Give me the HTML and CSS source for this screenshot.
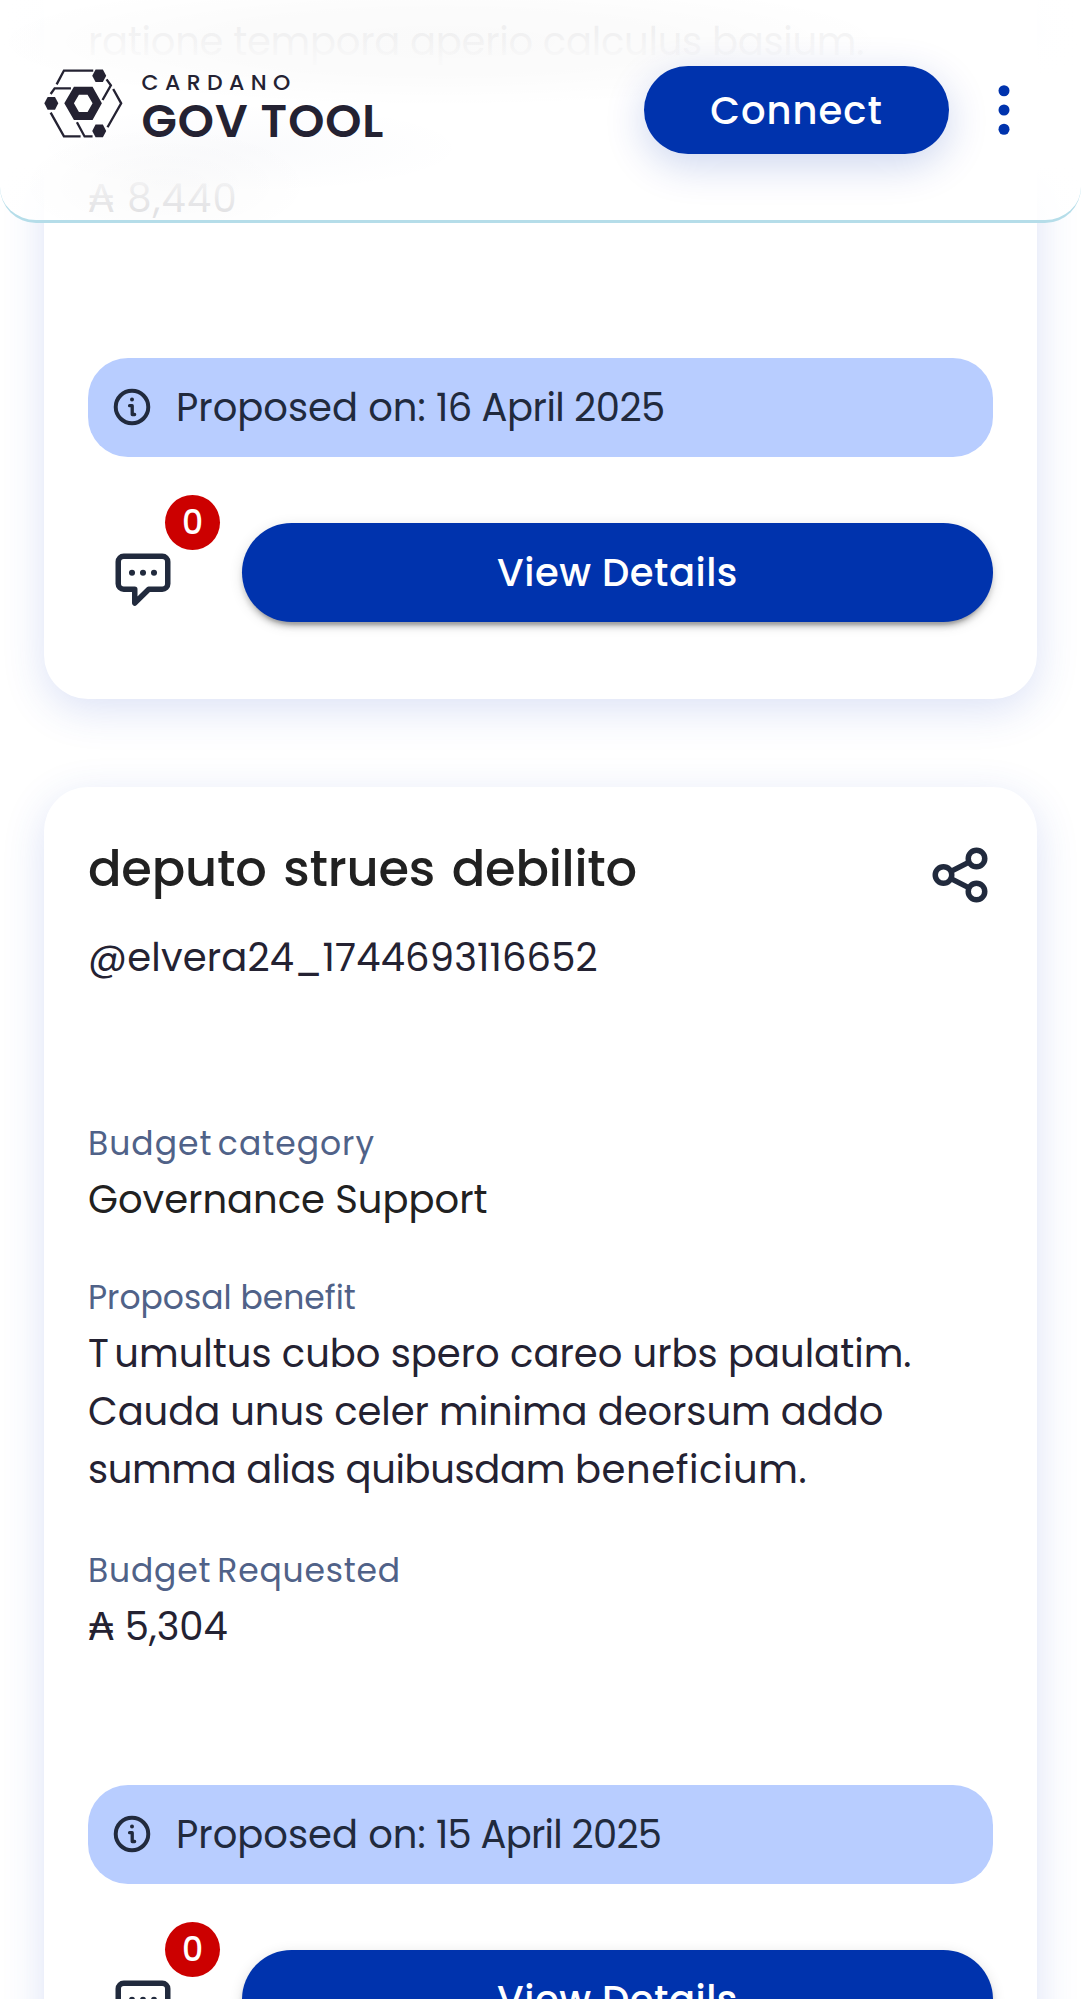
FILE: index.html
```html
<!DOCTYPE html>
<html lang="en">
<head>
<meta charset="utf-8">
<title>Cardano GovTool</title>
<link rel="stylesheet" href="styles.css">
</head>
<body>
<svg width="0" height="0" class="sprite" aria-hidden="true">
  <symbol id="i-info" viewBox="0 0 20 20">
    <circle cx="10" cy="10" r="7.4" fill="none" stroke="currentColor" stroke-width="1.8"/>
    <circle cx="10" cy="6.6" r=".9" fill="currentColor"/>
    <path d="M8.9 9.4h1.2v4h1.1" fill="none" stroke="currentColor" stroke-width="1.5" stroke-linecap="round" stroke-linejoin="round"/>
  </symbol>
  <symbol id="i-comment" viewBox="0 0 24 24">
    <path d="M5 3h14a2 2 0 0 1 2 2v8a2 2 0 0 1-2 2h-4.900L9 20v-5H5a2 2 0 0 1-2-2V5a2 2 0 0 1 2-2z" fill="none" stroke="currentColor" stroke-width="2" stroke-linejoin="round"/>
    <g fill="currentColor"><circle cx="8" cy="9" r="1.1"/><circle cx="12" cy="9" r="1.1"/><circle cx="16" cy="9" r="1.1"/></g>
  </symbol>
  <symbol id="i-share" viewBox="0 0 24 24">
    <g fill="none" stroke="currentColor" stroke-width="2"><circle cx="6" cy="12" r="3"/><circle cx="18" cy="6" r="3"/><circle cx="18" cy="18" r="3"/><path d="M8.700 10.700l6.600-3.400M8.700 13.300l6.600 3.400"/></g>
  </symbol>
</svg>

<header class="topbar">
  <div class="logo">
    <svg class="logo-mark" viewBox="42 57 236 207">
      <g fill="none" stroke="currentColor" stroke-width="7">
        <path d="M80 103L102 61.500H190M230 88L243 106L218 150M250 117L274 160L233 232M62 132L74 115H123M62 188L102 259.500H152M141 217L164 259.500H188"/>
      </g>
      <g fill="currentColor">
        <path d="M187 77l10-19h22l10 19-10 19h-22z"/>
        <path d="M43 160l10-19h22l10 19-10 19H53z"/>
        <path d="M187 243l10-19h22l10 19-10 19h-22z"/>
        <path fill-rule="evenodd" d="M103 160L132 110H188L216 160L188 210H132ZM132 160L147 186H173L188 160L173 134H147Z"/>
      </g>
    </svg>
    <div class="logo-text">
      <span class="logo-small">CARDANO</span>
      <span class="logo-big">GOV TOOL</span>
    </div>
  </div>
  <div class="actions">
    <button class="connect">Connect</button>
    <svg class="more" viewBox="0 0 24 24" fill="currentColor"><circle cx="12" cy="5" r="2"/><circle cx="12" cy="12" r="2"/><circle cx="12" cy="19" r="2"/></svg>
  </div>
</header>

<main class="list">
  <article class="card card-first">
    <p class="value benefit-tail">ratione tempora aperio calculus basium.</p>
    <section class="field last">
      <p class="value amount-wide">₳ 8,440</p>
    </section>
    <div class="proposed"><svg class="icon-info"><use href="#i-info"/></svg><span>Proposed on: <span class="date">16 April 2025</span></span></div>
    <div class="foot">
      <div class="comments"><svg class="icon"><use href="#i-comment"/></svg><span class="badge">0</span></div>
      <button class="details">View Details</button>
    </div>
  </article>

  <article class="card">
    <div class="head">
      <h2 class="title">deputo strues debilito</h2>
      <svg class="icon share"><use href="#i-share"/></svg>
    </div>
    <p class="value user">@elvera24_1744693116652</p>
    <section class="field">
      <h3 class="label label-wide">Budget category</h3>
      <p class="value dark">Governance Support</p>
    </section>
    <section class="field">
      <h3 class="label">Proposal benefit</h3>
      <p class="value benefit">Tumultus cubo spero careo urbs paulatim.<br><span class="line-2">Cauda unus celer minima deorsum addo</span><br><span class="line-3">summa alias quibusdam </span><span class="line-end">beneficium.</span></p>
    </section>
    <section class="field last">
      <h3 class="label label-requested">Budget Requested</h3>
      <p class="value">₳ 5,304</p>
    </section>
    <div class="proposed"><svg class="icon-info"><use href="#i-info"/></svg><span>Proposed on: <span class="date date-tight">15 April 2025</span></span></div>
    <div class="foot">
      <div class="comments"><svg class="icon"><use href="#i-comment"/></svg><span class="badge">0</span></div>
      <button class="details">View Details</button>
    </div>
  </article>
</main>
</body>
</html>
```
FILE: styles.css
```css
* { box-sizing: border-box; }
html, body { margin: 0; height: 1999px; overflow: hidden; }
body { background: #fff; color: #242232; font-family: Poppins, Inter, sans-serif; font-size: 38.5px; line-height: 58px; position: relative; }
h2, h3, p { margin: 0; font-weight: 400; }
button { border: 0; margin: 0; padding: 2px 0 0; font: inherit; color: #fff; background: #0033ad; }
svg { display: block; flex: none; }
.sprite { position: absolute; }

.topbar {
  position: absolute; top: 0; left: 0; z-index: 2;
  width: 100%; height: 223px; padding: 0 44px;
  display: flex; justify-content: space-between; align-items: flex-start;
  border-bottom: 3px solid #b5dde9; border-radius: 0 0 36px 36px;
  background:
    radial-gradient(ellipse 460px 65px at 440px 42px, rgba(0,0,0,.02), rgba(0,0,0,.016) 50%, transparent),
    radial-gradient(ellipse 150px 60px at 165px 185px, rgba(0,0,20,.02), transparent),
    radial-gradient(ellipse 220px 45px at 250px 148px, rgba(40,70,140,.022), transparent),
    linear-gradient(rgba(255,255,255,.94), rgba(255,255,255,.95) 30px, rgba(255,255,255,.985) 56px, #fff 75px, #fff 165px, rgba(255,255,255,.95) 185px, rgba(255,255,255,.88) 212px);
}
.logo { display: flex; padding-top: 69px; gap: 19px; }
.logo-mark { width: 78.500px; height: 69px; }
.logo-text { display: flex; flex-direction: column; white-space: nowrap; }
.logo-small { font-size: 22px; line-height: 28px; font-weight: 500; letter-spacing: 6.400px; }
.logo-big { font-size: 46px; line-height: 48px; font-weight: 600; letter-spacing: 1px; }
.actions { display: flex; align-items: center; padding-top: 66px; gap: 22px; }
.connect { width: 305px; height: 88px; border-radius: 44px; font-weight: 500; letter-spacing: 1px; box-shadow: 0 11px 41px rgba(0,51,173,.2); }
.more { width: 66px; height: 66px; color: #0033ad; }

.list { display: flex; flex-direction: column; gap: 88px; padding: 0 44px; }
.card { background: #fff; border-radius: 44px; padding: 49px 44px 77px; box-shadow: 0 11px 41px rgba(47,85,200,.17); }
.card-first { padding-top: 13px; border-radius: 0 0 44px 44px; }
.head { display: flex; justify-content: space-between; height: 66px; margin-bottom: 27px; }
.title { font-size: 49.500px; line-height: 66px; font-weight: 500; color: #212121; white-space: nowrap; letter-spacing: -.2px; word-spacing: 4px; }
.icon { width: 66px; height: 66px; color: #212a3d; }
.share { margin-top: 6px; }
.value { white-space: nowrap; }
.dark { color: #212121; }
.user { margin-bottom: 132px; letter-spacing: .18px; }
.field { margin-bottom: 44.500px; }
.benefit::first-letter { letter-spacing: 5.500px; }
.line-2 { letter-spacing: -.07px; }
.line-3 { letter-spacing: -.35px; }
.line-end { letter-spacing: .6px; }
.field.last { margin: 47px 0 129.300px; }
.benefit-tail { letter-spacing: -.26px; }
.card-first .field.last { margin: 98.500px 0 130.300px; }
.amount-wide { letter-spacing: 1.200px; }
.label { font-size: 33px; line-height: 49.500px; margin-bottom: 2.250px; color: #506288; white-space: nowrap; }
.label-wide { letter-spacing: 1px; word-spacing: -4.400px; }
.label-requested { letter-spacing: .8px; word-spacing: -3.500px; }

.proposed { display: flex; align-items: center; gap: 22px; height: 99px; padding-left: 22px; border-radius: 40px; background: #b8cdff; color: #212a3d; white-space: nowrap; }
.proposed > span { padding-top: 2px; }
.date { letter-spacing: -.5px; }
.date-tight { letter-spacing: -.75px; }
.icon-info { width: 44px; height: 44px; }
.foot { display: flex; margin-top: 66px; }
.comments { position: relative; width: 154px; padding: 25px 0 0 22px; height: 99px; }
.badge { position: absolute; left: 77px; top: -27.500px; width: 55px; height: 55px; border-radius: 50%; background: #c00; color: #fff; font-size: 33px; line-height: 56px; font-weight: 500; text-align: center; }
.details { flex: 1; height: 99px; border-radius: 50px; font-weight: 500; letter-spacing: .5px; box-shadow: 0 8px 3px -5px rgba(0,0,0,.2), 0 5.500px 5.500px rgba(0,0,0,.14), 0 3px 14px rgba(0,0,0,.12); }
```
